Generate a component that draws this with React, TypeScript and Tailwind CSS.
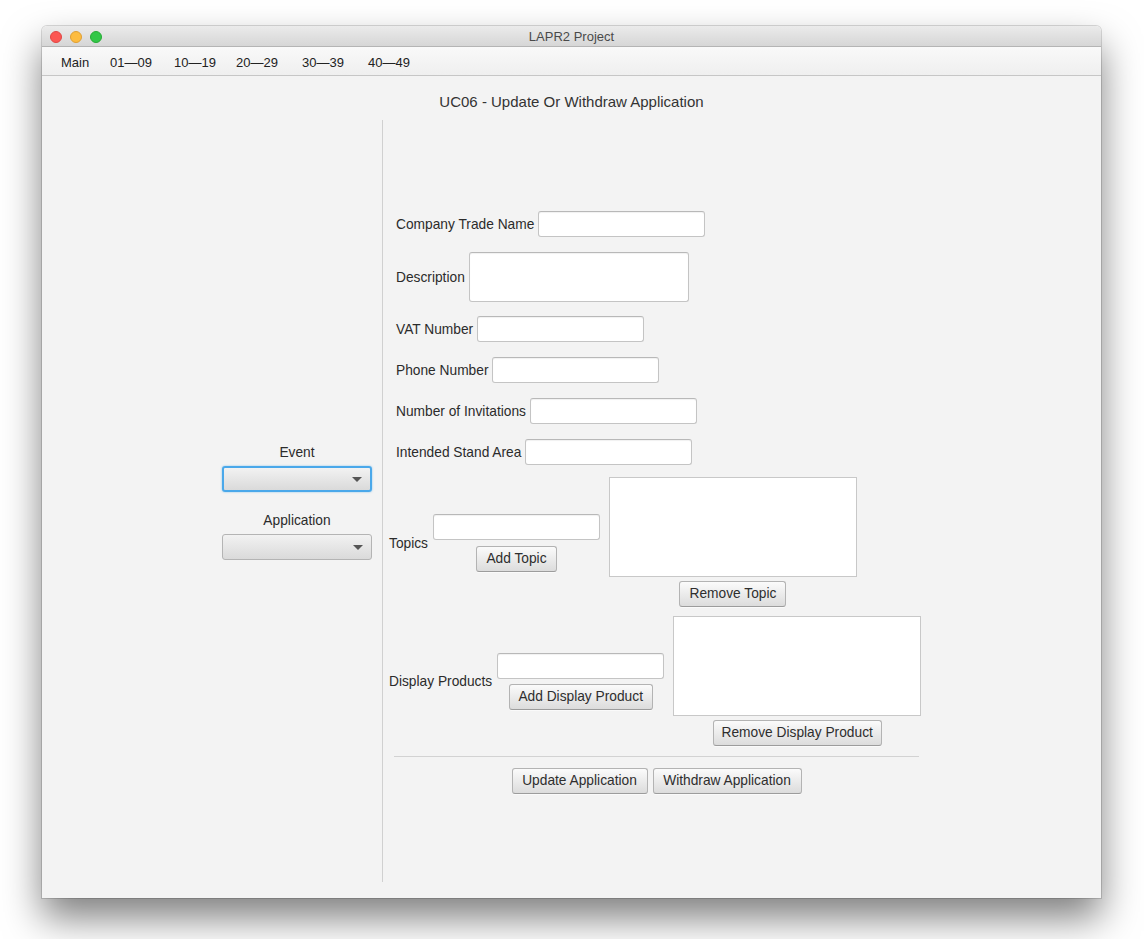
import { ReactNode } from 'react';

const font = { fontFamily: '"Liberation Sans", Arial, sans-serif' };

function Btn({ w, children }: { w: string; children: ReactNode }) {
  return (
    <div
      className={`${w} h-[26px] flex items-center justify-center pt-[1px] rounded-[3px] border border-[#b3b3b3] border-b-[#9c9c9c] bg-gradient-to-b from-[#fbfbfb] to-[#dcdcdc] text-[13.75px] text-[#2e2e2e] shadow-[0_1px_0_rgba(255,255,255,0.6)]`}
    >
      {children}
    </div>
  );
}

function Field({ w = 'w-[167px]', h = 'h-[26px]' }: { w?: string; h?: string }) {
  return (
    <div
      className={`${w} ${h} rounded-[3px] border border-[#c4c4c4] border-t-[#b8b8b8] bg-white shadow-[inset_0_1px_1px_rgba(0,0,0,0.06)]`}
    />
  );
}

function Combo({ focused }: { focused?: boolean }) {
  return (
    <div
      className={`w-[150px] h-[26px] flex items-center justify-end pr-[8px] rounded-[3px] bg-gradient-to-b from-[#f2f2f2] to-[#dadada] ${
        focused
          ? 'border-2 border-[#4aa8ea] shadow-[0_0_2px_rgba(74,168,234,0.7)]'
          : 'border border-[#b4b4b4]'
      }`}
    >
      <span className="w-0 h-0 border-l-[5px] border-r-[5px] border-t-[5px] border-l-transparent border-r-transparent border-t-[#555]" />
    </div>
  );
}

function Row({ label, mt, children }: { label: string; mt: string; children: ReactNode }) {
  return (
    <div className={`flex items-center gap-[4px] pl-[13px] ${mt}`}>
      <span className="pt-[3px]">{label}</span>
      {children}
    </div>
  );
}

const menu = [
  ['Main', 'w-[49px]'],
  ['01—09', 'w-[64px]'],
  ['10—19', 'w-[62px]'],
  ['20—29', 'w-[66px]'],
  ['30—39', 'w-[66px]'],
  ['40—49', 'w-[60px]'],
];

export default function App() {
  return (
    <div className="w-[1144px] h-[939px] bg-white pt-[26px] pl-[42px] overflow-hidden" style={font}>
      <div className="w-[1059px] h-[872px] flex flex-col shadow-[0_20px_38px_rgba(0,0,0,0.5),0_0_0_1px_rgba(0,0,0,0.14)] rounded-t-[5px] overflow-hidden">
        {/* title bar */}
        <div className="relative h-[21px] flex items-center justify-center pt-[1px] bg-gradient-to-b from-[#ebebeb] to-[#d6d6d6] border-b border-[#b4b4b4] text-[13px] text-[#4a4a4a]">
          <div className="absolute left-[8px] top-[5px] flex gap-[8px]">
            <span className="w-[12px] h-[12px] rounded-full bg-[#fc5753] border border-[#df4744]" />
            <span className="w-[12px] h-[12px] rounded-full bg-[#fdbc40] border border-[#de9f34]" />
            <span className="w-[12px] h-[12px] rounded-full bg-[#33c748] border border-[#27aa35]" />
          </div>
          LAPR2 Project
        </div>

        {/* menu bar */}
        <div className="h-[29px] flex items-center pt-[3px] pl-[19px] bg-gradient-to-b from-[#f9f9f9] to-[#efefef] border-b border-[#c6c6c6] text-[13px] text-[#222]">
          {menu.map(([t, w]) => (
            <span key={t} className={w}>
              {t}
            </span>
          ))}
        </div>

        {/* content */}
        <div className="flex-1 flex flex-col bg-[#f3f3f3] text-[13.75px] text-[#2b2b2b]">
          <div className="h-[16px] mt-[18px] flex items-center justify-center text-[15px] text-[#333]">
            UC06 - Update Or Withdraw Application
          </div>

          <div className="mt-[10px] h-[762px] flex">
            {/* left column */}
            <div className="w-[341px] border-r border-[#d0d0d0] flex flex-col items-end justify-center pt-[3px] pr-[10px]">
              <div className="w-[150px] flex flex-col items-center">
                <span className="leading-[16px]">Event</span>
                <div className="mt-[5px]">
                  <Combo focused />
                </div>
                <span className="leading-[16px] mt-[21px]">Application</span>
                <div className="mt-[5px]">
                  <Combo />
                </div>
              </div>
            </div>

            {/* right column */}
            <div className="flex-1 flex flex-col pt-[91px]">
              <Row label="Company Trade Name" mt="mt-0">
                <Field />
              </Row>
              <Row label="Description" mt="mt-[15px]">
                <Field w="w-[220px]" h="h-[50px]" />
              </Row>
              <Row label="VAT Number" mt="mt-[14px]">
                <Field />
              </Row>
              <Row label="Phone Number" mt="mt-[15px]">
                <Field />
              </Row>
              <Row label="Number of Invitations" mt="mt-[15px]">
                <Field />
              </Row>
              <Row label="Intended Stand Area" mt="mt-[15px]">
                <Field />
              </Row>

              {/* topics */}
              <div className="mt-[12px] flex items-center pl-[6px]">
                <span className="mr-[5px] pt-[4px]">Topics</span>
                <div className="flex flex-col items-center gap-[6px] pt-[2px]">
                  <Field />
                  <Btn w="w-[81px]">Add Topic</Btn>
                </div>
                <div className="ml-[9px] flex flex-col items-center gap-[4px]">
                  <div className="w-[248px] h-[100px] bg-white border border-[#c8c8c8]" />
                  <Btn w="w-[107px]">Remove Topic</Btn>
                </div>
              </div>

              {/* display products */}
              <div className="mt-[9px] flex items-center pl-[6px]">
                <span className="mr-[5px] pt-[3px]">Display Products</span>
                <div className="flex flex-col items-center gap-[5px]">
                  <Field />
                  <Btn w="w-[144px]">Add Display Product</Btn>
                </div>
                <div className="ml-[9px] flex flex-col items-center gap-[4px]">
                  <div className="w-[248px] h-[100px] bg-white border border-[#c8c8c8]" />
                  <Btn w="w-[169px]">Remove Display Product</Btn>
                </div>
              </div>

              <div className="ml-[11px] w-[525px] mt-[10px] flex flex-col items-center">
                <div className="w-full h-px bg-[#d2d2d2]" />
                <div className="mt-[11px] flex gap-[5px]">
                  <Btn w="w-[136px]">Update Application</Btn>
                  <Btn w="w-[149px]">Withdraw Application</Btn>
                </div>
              </div>
            </div>
          </div>
        </div>
      </div>
    </div>
  );
}
